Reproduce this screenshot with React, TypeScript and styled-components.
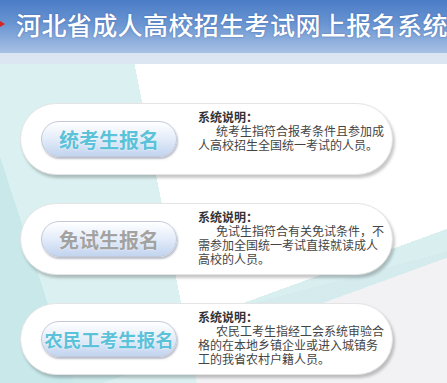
import React from 'react';
import styled, { createGlobalStyle } from 'styled-components';

interface Entry {
  label: string;
  muted?: boolean;
  size: number;
  desc: string;
}

const entries: Entry[] = [
  { label: '统考生报名', size: 20, desc: '统考生指符合报考条件且参加成人高校招生全国统一考试的人员。' },
  { label: '免试生报名', size: 20, muted: true, desc: '免试生指符合有关免试条件，不需参加全国统一考试直接就读成人高校的人员。' },
  { label: '农民工考生报名', size: 18.5, desc: '农民工考生指经工会系统审验合格的在本地乡镇企业或进入城镇务工的我省农村户籍人员。' },
];

const App: React.FC = () => {
  return (
    <Page>
      <GlobalStyle />
      <Header>
        <Arrow width="6" height="10" viewBox="0 0 6 10">
          <path d="M0 2 L5 5 L0 8 Z" fill="#d8261f" />
        </Arrow>
        <Title>河北省成人高校招生考试网上报名系统</Title>
      </Header>
      <Band />
      <Main>
        {entries.map((e) => (
          <Card key={e.label}>
            <EntryButton $muted={e.muted} $size={e.size}>{e.label}</EntryButton>
            <Notes>
              <b>系统说明：</b>
              <br />
              <Indent />
              {e.desc}
            </Notes>
          </Card>
        ))}
      </Main>
    </Page>
  );
};

export default App;

const GlobalStyle = createGlobalStyle`
  html, body {
    margin: 0;
    padding: 0;
    background: #fff;
  }
  body {
    font-family: "Noto Sans CJK SC", "Noto Sans", sans-serif;
  }
`;

const Page = styled.div`
  width: 447px;
  height: 383px;
  overflow: hidden;
  display: flex;
  flex-direction: column;
`;

const Header = styled.div`
  height: 53px;
  flex-shrink: 0;
  display: flex;
  align-items: center;
  background: linear-gradient(to bottom, #4a7cc6 0%, #6a95d2 45%, #a8c1e4 100%);
  white-space: nowrap;
  overflow: hidden;
`;

const Arrow = styled.svg`
  flex-shrink: 0;
  margin: -6px 10px 0 0;
`;

const Title = styled.h1`
  margin: -6px 0 0 0;
  font-size: 25px;
  font-weight: 500;
  letter-spacing: 0.4px;
  color: #fff;
  text-shadow: 0 0 2px rgba(40, 80, 150, 0.6);
`;

const Band = styled.div`
  height: 11px;
  flex-shrink: 0;
  background: #dce6f2;
`;

const Main = styled.div`
  flex: 1;
  display: flex;
  flex-direction: column;
  gap: 28px;
  padding: 39px 0 0 20px;
  background:
    linear-gradient(160deg, transparent 0 68%, rgba(200, 232, 234, 0.7) 68% 74%, transparent 74%),
    linear-gradient(72deg, #c9e8ea 0 70px, transparent 70px),
    linear-gradient(79deg, #dbf0f0 0 193px, transparent 193px),
    linear-gradient(165deg, transparent 0 70%, #f2f2f5 70% 100%),
    #fff;
`;

const Card = styled.div`
  width: 373px;
  height: 72px;
  box-sizing: border-box;
  display: flex;
  align-items: center;
  padding-left: 20px;
  gap: 21px;
  background: #fff;
  border: 1px solid #e4e4e4;
  border-radius: 36px;
  box-shadow: 2px 3px 3px rgba(0, 0, 0, 0.22);
`;

const EntryButton = styled.button<{ $muted?: boolean; $size: number }>`
  width: 136px;
  height: 36px;
  flex-shrink: 0;
  padding: 0;
  border: 1px solid #c2cada;
  border-radius: 18px;
  background: linear-gradient(to bottom, #ffffff 0%, #e6eefa 45%, #c2d4ef 100%);
  box-shadow: 1px 2px 2px rgba(60, 70, 100, 0.35);
  font-family: "Noto Sans CJK SC", sans-serif;
  font-size: ${(p) => p.$size}px;
  font-weight: 700;
  color: ${(p) => (p.$muted ? '#a2a2a2' : '#5bc2d9')};
  text-shadow: 0 0 2px #fff;
  cursor: pointer;
`;

const Notes = styled.p`
  align-self: flex-start;
  width: 190px;
  margin: 0;
  padding-top: 7px;
  font-family: "Liberation Sans", "Noto Sans CJK SC", sans-serif;
  font-size: 12px;
  line-height: 14px;
  color: #444;

  b {
    color: #333;
  }
`;

const Indent = styled.span`
  display: inline-block;
  width: 18px;
`;
